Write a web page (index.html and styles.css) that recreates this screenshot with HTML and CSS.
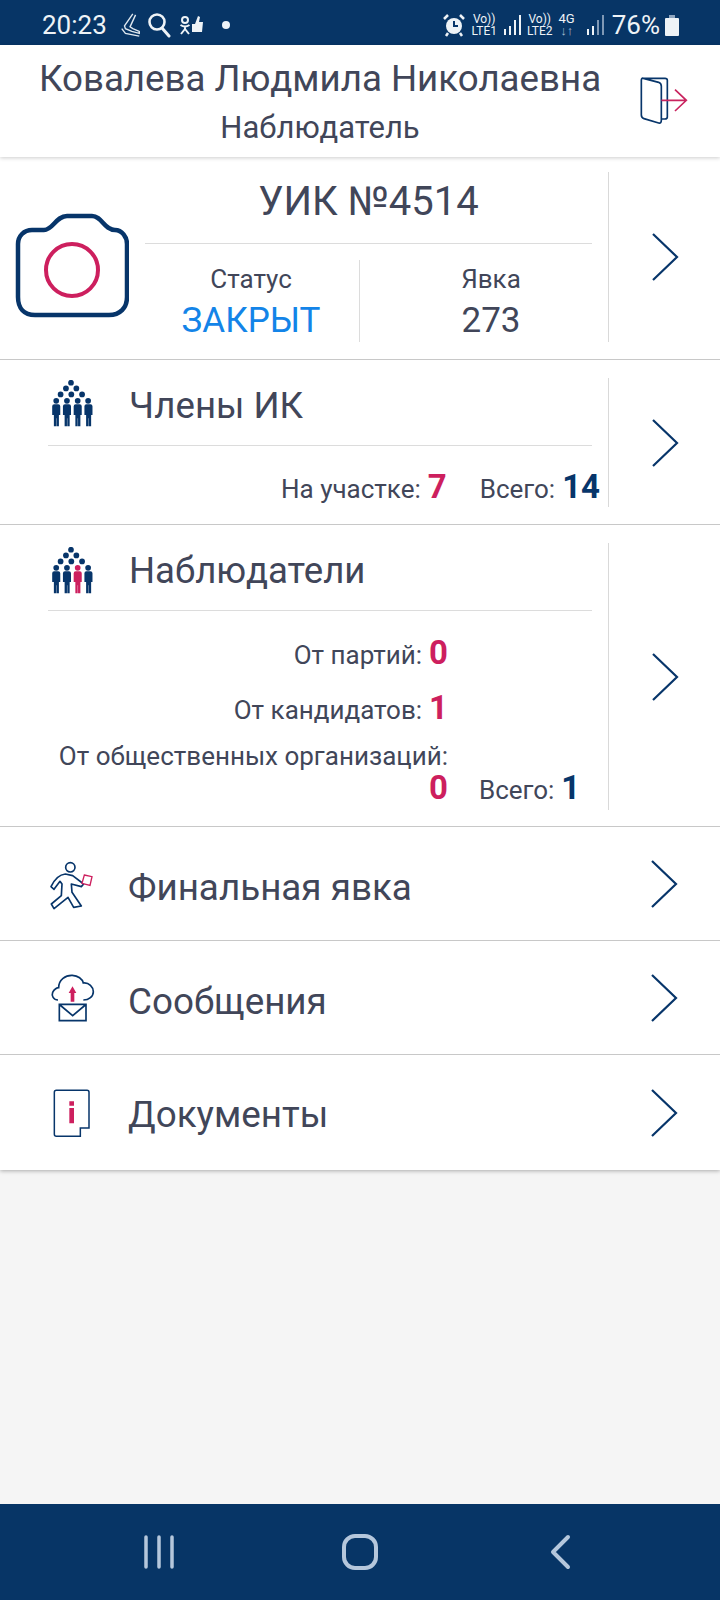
FILE: index.html
```html
<!DOCTYPE html>
<html>
  <head>
    <title>УИК №4514</title>
    <link rel="stylesheet" href="styles.css">
  </head>

  <body>
    <div class="page">
      <div class="status-bar">
        <div class="status-left">
          <span class="status-time">20:23</span>
          <svg class="ic-shoe" width="21" height="24" viewBox="0 0 21 26"><path d="M13 1 4 14l1 3 7 3 8 2 0-2-7-3-3-2 6-13M1 17l4 5 15 3" fill="none" stroke="#dfe8f0" stroke-width="1.500"/></svg>
          <svg class="ic-search" width="24" height="26" viewBox="0 0 24 26"><circle cx="10" cy="10" r="7.500" fill="none" stroke="#eef3f7" stroke-width="2.600"/><path d="M15 16l7 8" stroke="#eef3f7" stroke-width="3" stroke-linecap="round"/></svg>
          <svg class="ic-social" width="25" height="20" viewBox="0 0 25 20"><circle cx="6" cy="5" r="3" fill="none" stroke="#eef3f7" stroke-width="2"/><path d="M1.500 10c3 2 6 2 9 0M6 12v2M2 19l4-5 4 5" fill="none" stroke="#eef3f7" stroke-width="2"/><path d="M13 9h3l3-8 2 1-1 5h4l-1 10H13z" fill="#eef3f7"/></svg>
          <span class="status-dot"></span>
        </div>
        <div class="status-right">
          <svg class="ic-alarm" width="22" height="24" viewBox="0 0 22 24"><circle cx="11" cy="13" r="8" fill="#eef3f7"/><path d="M11 8v5h4" fill="none" stroke="#07356a" stroke-width="2"/><path d="M1 6l4-4M21 6l-4-4M5 20l-2 3M17 20l2 3" stroke="#eef3f7" stroke-width="2.500"/></svg>
          <span class="sim">Vo))<br>LTE1</span>
          <svg class="ic-signal" width="18" height="22" viewBox="0 0 18 22"><path d="M1 15h2v6H1zM6 12h2v9H6zM11 6h2v15h-2z" fill="#eef3f7"/><path d="M16 1h2v20h-2z" fill="#eef3f7"/></svg>
          <span class="sim">Vo))<br>LTE2</span>
          <span class="sim sim-4g">4G<br><span class="sim-arrows">↓↑</span></span>
          <svg class="ic-signal2" width="18" height="22" viewBox="0 0 18 22"><path d="M1 15h2v6H1zM6 12h2v9H6z" fill="#eef3f7"/><path d="M11 6h2v15h-2zM16 1h2v20h-2z" fill="#7f98b5"/></svg>
          <span class="status-batt">76%</span>
          <svg width="14" height="21" viewBox="0 0 14 21"><path d="M4 0h6v3H4z" fill="#8fa6c0"/><path d="M1 3h12q1 0 1 1v16q0 1-1 1H1q-1 0-1-1V4q0-1 1-1z" fill="#eef3f7"/></svg>
        </div>
      </div>

      <header class="top">
        <div class="top-text">
          <div class="top-name">Ковалева Людмила Николаевна</div>
          <div class="top-role">Наблюдатель</div>
        </div>
        <svg class="top-exit" width="48" height="48" viewBox="60 50 144 144">
          <path d="M66 54H135Q142 54 142 60V170Q142 176 135 176H124M70 54 116 66Q124 69 124 78V180Q124 190 116 188L72 175Q64 172 64 164V60Q64 52 70 54Z" fill="none" stroke="#07356a" stroke-width="5"/>
          <path d="M124 120H198M165 88 199 120 165 152" fill="none" stroke="#c9245f" stroke-width="5"/>
        </svg>
      </header>

      <div class="card">
        <section class="row row-station">
          <div class="camera">
            <svg width="114" height="106" viewBox="0 0 114 106">
              <path d="M17 17H29C38 17 41 3 52 3H77C87 3 89 17 100 17C107 17 112 24 112 31V84C112 95 105 102 94 102H20C9 102 3 95 3 84V31C3 23 9 17 17 17Z" fill="none" stroke="#07356a" stroke-width="4.500"/>
              <circle cx="57" cy="57" r="26" fill="none" stroke="#cd1f5e" stroke-width="4"/>
            </svg>
          </div>
          <div class="row-main station-main">
            <div class="station-title">УИК №4514</div>
            <div class="station-stats">
              <div class="stat">
                <div class="stat-label">Статус</div>
                <div class="stat-value stat-closed">ЗАКРЫТ</div>
              </div>
              <div class="stat stat-turnout">
                <div class="stat-label">Явка</div>
                <div class="stat-value">273</div>
              </div>
            </div>
          </div>
          <div class="row-go">
            <svg class="chevron" width="28" height="50" viewBox="0 0 28 50"><path d="M2 2 26 25 2 48" fill="none" stroke="#07356a" stroke-width="2.200"/></svg>
          </div>
        </section>

        <section class="row row-members">
          <div class="row-main">
            <div class="row-head">
              <svg class="people" width="44" height="47" viewBox="60 30 130 140">
                <g fill="#07356a">
                  <circle cx="122" cy="38" r="8.500"/><circle cx="107" cy="55" r="8.500"/><circle cx="138" cy="55" r="8.500"/><circle cx="91" cy="73" r="8.500"/><circle cx="123" cy="73" r="8.500"/><circle cx="155" cy="73" r="8.500"/><circle cx="78" cy="92" r="8.500"/><circle cx="110" cy="92" r="8.500"/><circle cx="142" cy="92" r="8.500"/><circle cx="173" cy="92" r="8.500"/>
                  <path d="M72 102h12q6 0 6 6v26h-4v34h-7v-24h-1v24h-7v-34h-5v-26q0-6 6-6z"/>
                  <path d="M104 102h12q6 0 6 6v26h-4v34h-7v-24h-1v24h-7v-34h-5v-26q0-6 6-6z"/>
                  <path d="M136 102h12q6 0 6 6v26h-4v34h-7v-24h-1v24h-7v-34h-5v-26q0-6 6-6z"/>
                  <path d="M168 102h12q6 0 6 6v26h-4v34h-7v-24h-1v24h-7v-34h-5v-26q0-6 6-6z"/>
                </g>
              </svg>
              <div class="row-title">Члены ИК</div>
            </div>
            <div class="count-line count-members">
              <span class="count-label">На участке:</span><b class="num-red">7</b>
              <span class="count-label count-total">Всего:</span><b class="num-navy">14</b>
            </div>
          </div>
          <div class="row-go">
            <svg class="chevron" width="28" height="50" viewBox="0 0 28 50"><path d="M2 2 26 25 2 48" fill="none" stroke="#07356a" stroke-width="2.200"/></svg>
          </div>
        </section>

        <section class="row row-observers">
          <div class="row-main">
            <div class="row-head">
              <svg class="people people-obs" width="44" height="47" viewBox="60 30 130 140">
                <g fill="#07356a">
                  <circle cx="122" cy="38" r="8.500"/><circle cx="107" cy="55" r="8.500"/><circle cx="138" cy="55" r="8.500"/><circle cx="91" cy="73" r="8.500"/><circle cx="123" cy="73" r="8.500"/><circle cx="155" cy="73" r="8.500"/><circle cx="78" cy="92" r="8.500"/><circle cx="110" cy="92" r="8.500"/><circle cx="173" cy="92" r="8.500"/>
                  <path d="M72 102h12q6 0 6 6v26h-4v34h-7v-24h-1v24h-7v-34h-5v-26q0-6 6-6z"/>
                  <path d="M104 102h12q6 0 6 6v26h-4v34h-7v-24h-1v24h-7v-34h-5v-26q0-6 6-6z"/>
                  <path d="M168 102h12q6 0 6 6v26h-4v34h-7v-24h-1v24h-7v-34h-5v-26q0-6 6-6z"/>
                </g>
                <g fill="#cd1f5e">
                  <circle cx="142" cy="92" r="8.500"/>
                  <path d="M136 102h12q6 0 6 6v26h-4v34h-7v-24h-1v24h-7v-34h-5v-26q0-6 6-6z"/>
                </g>
              </svg>
              <div class="row-title">Наблюдатели</div>
            </div>
            <div class="observer-list">
              <div class="count-line count-obs"><span class="count-label">От партий:</span><b class="num-red">0</b></div>
              <div class="count-line count-obs"><span class="count-label">От кандидатов:</span><b class="num-red">1</b></div>
              <div class="count-line count-org"><span class="count-label">От общественных организаций:</span></div>
              <div class="count-line count-last">
                <b class="num-red">0</b>
                <span class="count-label count-total">Всего:</span><b class="num-navy">1</b>
              </div>
            </div>
          </div>
          <div class="row-go">
            <svg class="chevron" width="28" height="50" viewBox="0 0 28 50"><path d="M2 2 26 25 2 48" fill="none" stroke="#07356a" stroke-width="2.200"/></svg>
          </div>
        </section>

        <a class="link-row">
          <svg class="link-icon icon-walk" width="48" height="52" viewBox="58 25 144 156">
            <circle cx="125" cy="50" r="14" fill="none" stroke="#07356a" stroke-width="5"/>
            <path d="M110 70C90 72 78 85 67 108L76 116 94 92 100 100 98 135 68 160 76 174 118 140 135 170 158 166 130 125 128 100 158 108 165 100 132 75Z" fill="none" stroke="#07356a" stroke-width="5" stroke-linejoin="round"/>
            <path d="M167 73 190 78 184 104 160 98Z" fill="#fff" stroke="#cd1f5e" stroke-width="4"/>
          </svg>
          <span class="link-title">Финальная явка</span>
          <svg class="chevron link-chevron" width="28" height="50" viewBox="0 0 28 50"><path d="M2 2 26 25 2 48" fill="none" stroke="#07356a" stroke-width="2.200"/></svg>
        </a>

        <a class="link-row">
          <svg class="link-icon icon-mail" width="48" height="52" viewBox="58 40 144 156">
            <path d="M82 121C68 121 62 108 66 98 70 88 80 84 84 84 84 60 105 46 125 47 142 48 155 58 158 70 175 68 188 82 188 96 188 110 175 121 158 121" fill="none" stroke="#07356a" stroke-width="5"/>
            <path d="M120 126V100H114L125.500 80 137 100H131V126Z" fill="#cd1f5e"/>
            <path d="M86 134H166V183H86ZM88 136 126 168 164 136" fill="none" stroke="#07356a" stroke-width="5"/>
          </svg>
          <span class="link-title">Сообщения</span>
          <svg class="chevron link-chevron" width="28" height="50" viewBox="0 0 28 50"><path d="M2 2 26 25 2 48" fill="none" stroke="#07356a" stroke-width="2.200"/></svg>
        </a>

        <a class="link-row link-row-last">
          <svg class="link-icon icon-doc" width="48" height="52" viewBox="58 380 144 156">
            <path d="M80 390H172Q178 390 178 396V503H152V528H80Q74 528 74 522V396Q74 390 80 390Z" fill="none" stroke="#07356a" stroke-width="4.500"/>
            <path d="M119 423H133V436H119ZM119 443H133V489H119Z" fill="#cd1f5e"/>
          </svg>
          <span class="link-title">Документы</span>
          <svg class="chevron link-chevron" width="28" height="50" viewBox="0 0 28 50"><path d="M2 2 26 25 2 48" fill="none" stroke="#07356a" stroke-width="2.200"/></svg>
        </a>
      </div>

      <div class="filler"></div>

      <nav class="nav-bar">
        <svg width="34" height="36" viewBox="0 0 34 36"><path d="M4 3V33M17 3V33M30 3V33" stroke="#b5c7dc" stroke-width="3.500" stroke-linecap="round"/></svg>
        <svg width="36" height="36" viewBox="0 0 36 36"><rect x="2" y="2" width="32" height="32" rx="11" fill="none" stroke="#b5c7dc" stroke-width="4"/></svg>
        <svg width="22" height="36" viewBox="0 0 22 36"><path d="M18 3 3 18 18 33" fill="none" stroke="#b5c7dc" stroke-width="4" stroke-linecap="round" stroke-linejoin="round"/></svg>
      </nav>
    </div>
  </body>
</html>
```

FILE: styles.css
```css
body
{
  font-family: Roboto, "Noto Sans", sans-serif;
  margin: 0;
  background-color: #f5f5f5;
  color: #414659;
}

.page
{
  display: flex;
  flex-direction: column;
  width: 720px;
  height: 1600px;
  overflow: hidden;
}

.status-bar
{
  display: flex;
  justify-content: space-between;
  align-items: center;
  height: 45px;
  padding: 5px 41px 0 42px;
  box-sizing: border-box;
  background-color: #073566;
  color: #eef3f7;
  flex: none;
}

.status-left,
.status-right
{
  display: flex;
  align-items: center;
}

.status-time
{
  font-size: 26px;
  margin-right: 13px;
}

.ic-shoe
{
  margin-right: 6px;
}

.ic-search
{
  margin-right: 8px;
}

.status-dot
{
  width: 8px;
  height: 8px;
  margin-left: 18px;
  border-radius: 50%;
  background-color: #eef3f7;
}

.status-right
{
  gap: 6px;
}

.sim
{
  font-size: 12px;
  line-height: 12px;
  text-align: center;
}

.sim-4g
{
  margin: 0 5px 0 0;
  font-size: 13px;
}

.sim-arrows
{
  color: #a9bbd0;
}

.status-batt
{
  font-size: 26px;
  margin: 0 -1px 0 2px;
}

.top
{
  display: flex;
  align-items: center;
  height: 112px;
  background-color: #fff;
  box-shadow: 0 1px 4px rgba(0, 0, 0, 0.2);
  position: relative;
  flex: none;
}

.top-text
{
  width: 640px;
  text-align: center;
}

.top-name
{
  font-size: 36.700px;
  line-height: 44px;
  margin-top: -3px;
}

.top-role
{
  font-size: 31px;
  line-height: 38px;
  margin-top: 8px;
  margin-bottom: -5px;
}

.top-exit
{
  margin-top: -1px;
}

.card
{
  background-color: #fff;
  box-shadow: 0 1px 4px rgba(0, 0, 0, 0.3);
  flex: none;
}

.row
{
  display: flex;
  border-bottom: 1px solid #c8c8c8;
}

.row-main
{
  flex: 1;
  min-width: 0;
  padding-left: 48px;
  padding-right: 16px;
}

.row-go
{
  display: flex;
  align-items: center;
  justify-content: center;
  width: 111px;
  border-left: 1px solid #d9d9d9;
}

.chevron
{
  display: block;
}

.row-station
{
  height: 203px;
  padding: 15px 0 17px;
  box-sizing: border-box;
}

.camera
{
  width: 145px;
  padding: 41px 0 0 15px;
  box-sizing: border-box;
}

.station-main
{
  padding-left: 0;
}

.station-title
{
  height: 71px;
  border-bottom: 1px solid #dcdcdc;
  font-size: 40px;
  line-height: 60px;
  text-align: center;
}

.station-stats
{
  display: flex;
  margin-top: 16px;
  height: 82px;
}

.stat
{
  flex: 1;
  text-align: center;
}

.stat:first-child
{
  flex: none;
  width: 215px;
  padding-right: 2px;
  box-sizing: border-box;
  border-right: 1px solid #dcdcdc;
}

.stat-turnout
{
  padding-left: 30px;
}

.stat-label
{
  font-size: 26px;
  line-height: 38px;
}

.stat-value
{
  font-size: 35px;
  line-height: 46px;
}

.stat-closed
{
  color: #1384e8;
}

.row-members
{
  height: 165px;
  padding: 18px 0 17px;
  box-sizing: border-box;
}

.row-observers
{
  height: 302px;
  padding: 18px 0 16px;
  box-sizing: border-box;
}

.row-head
{
  display: flex;
  align-items: flex-start;
  gap: 35px;
  height: 68px;
  padding-top: 2px;
  box-sizing: border-box;
  border-bottom: 1px solid #dcdcdc;
}

.people
{
  margin-left: 2px;
  flex: none;
}

.people-obs
{
  margin-top: 2px;
}

.row-title
{
  font-size: 36.600px;
  line-height: 52px;
}

.count-line
{
  display: flex;
  justify-content: flex-end;
  align-items: baseline;
  font-size: 26px;
}

.count-line b
{
  font-size: 33px;
  margin-left: 7px;
}

.count-label
{
  white-space: nowrap;
}

.count-members
{
  margin-top: 19px;
  margin-right: -8px;
  line-height: 44px;
}

.count-total
{
  margin-left: 33px;
}

.num-red
{
  color: #cd1f5e;
}

.num-navy
{
  color: #07356a;
}

.observer-list
{
  padding: 20px 0 0;
  margin-right: 144px;
}

.count-obs
{
  height: 55px;
  line-height: 44px;
}

.count-org
{
  height: 30px;
  line-height: 40px;
  margin-top: -5px;
}

.count-last
{
  margin-right: -144px;
  justify-content: flex-start;
  padding-left: 381px;
  height: 44px;
  line-height: 44px;
}

.count-last .num-red
{
  margin-left: 0;
}

.count-last .count-total
{
  margin-left: 31px;
}

.link-row
{
  display: flex;
  align-items: center;
  height: 113px;
  padding-left: 48px;
  border-bottom: 1px solid #c8c8c8;
}

.link-row-last
{
  height: 115px;
  border-bottom: none;
}

.link-icon
{
  margin-right: 32px;
  flex: none;
}

.icon-walk
{
  margin-top: 2px;
}

.icon-mail
{
  margin-top: 2px;
  transform: translateX(2px);
}

.icon-doc
{
  transform: translateX(1px);
}

.link-title
{
  flex: 1;
  font-size: 36.800px;
  line-height: 44px;
  margin-top: 8px;
}

.link-row-last .link-title
{
  margin-top: 4px;
}

.link-chevron
{
  margin-right: 42px;
}

.filler
{
  flex: 1;
}

.nav-bar
{
  display: grid;
  grid-template-columns: repeat(3, 1fr);
  justify-items: center;
  align-items: center;
  height: 96px;
  padding: 0 58px;
  background-color: #073566;
  flex: none;
}
```
